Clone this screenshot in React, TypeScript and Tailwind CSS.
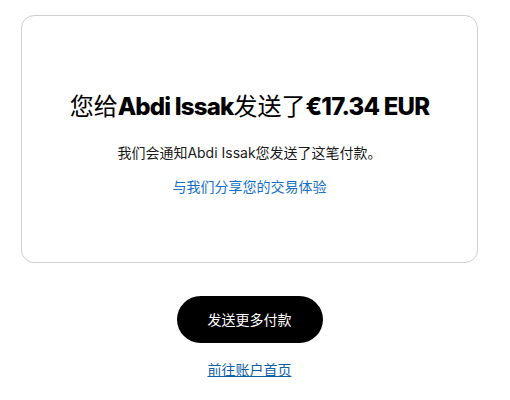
export default function App() {
  const font = { fontFamily: '"Inter", "Noto Sans CJK SC", sans-serif' };
  return (
    <div className="w-[510px] h-[400px] bg-white flex flex-col items-center pt-[15px] pl-[21px] pr-[32px]" style={font}>
      <div className="w-[457px] h-[248px] border border-[#cfcfcf] rounded-[13px] flex flex-col items-center pt-[74px]">
        <h1 className="text-[24px] leading-[34px] text-black whitespace-nowrap">
          <span className="font-normal">您给</span>
          <span className="font-extrabold tracking-[-0.8px]">Abdi Issak</span>
          <span className="font-normal">发送了</span>
          <span className="font-extrabold tracking-[-0.8px]">€17.34 EUR</span>
        </h1>
        <p className="mt-[19px] text-[14px] leading-[20px] text-[#1a1a1a]">我们会通知Abdi Issak您发送了这笔付款。</p>
        <a className="mt-[14px] text-[14px] leading-[20px] text-[#1570c6] cursor-pointer">与我们分享您的交易体验</a>
      </div>
      <button className="mt-[33px] w-[146px] h-[47px] rounded-full bg-black text-white text-[14px]">发送更多付款</button>
      <a className="mt-[17px] text-[14px] leading-[20px] text-[#0e5ea8] underline cursor-pointer">前往账户首页</a>
    </div>
  );
}
